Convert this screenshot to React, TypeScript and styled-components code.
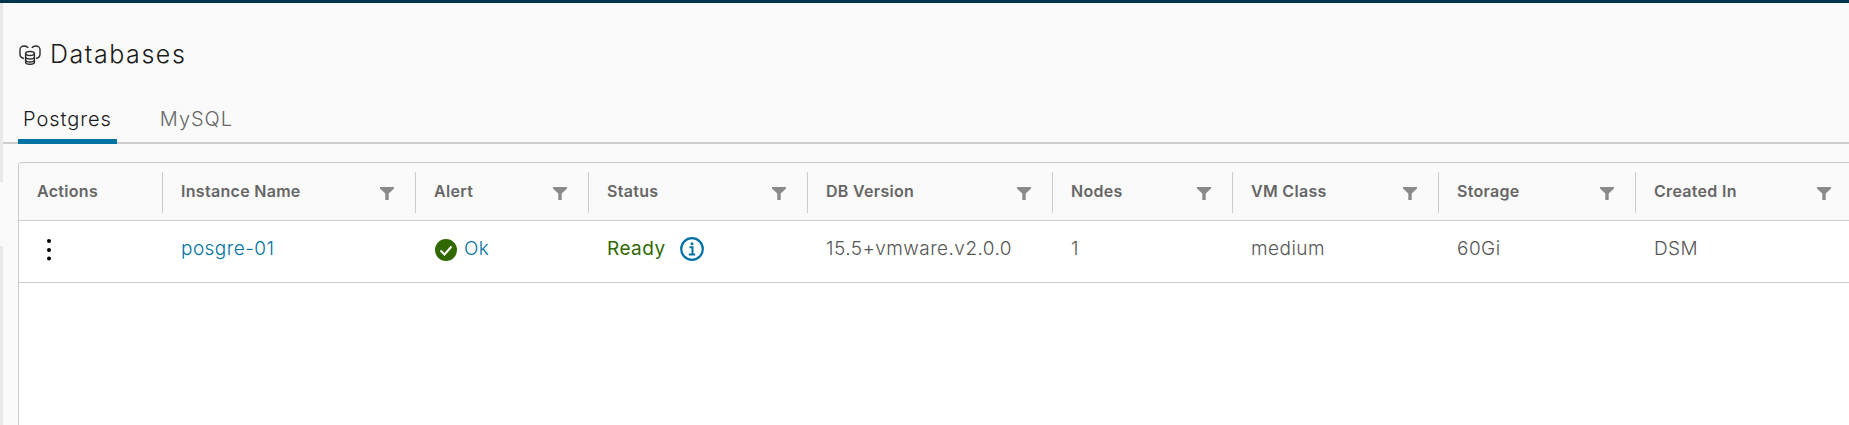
import React from 'react';
import styled, { createGlobalStyle } from 'styled-components';

const GlobalStyle = createGlobalStyle`
    html, body {
        margin: 0;
        padding: 0;
        height: 100%;
        overflow: hidden;
        background-color: #fafafa;
    }

    body {
        font-family: 'Inter', 'Open Sans', sans-serif;
    }
`;

const Page = styled.div`
    display: flex;
    flex-direction: column;
    width: 100vw;
    height: 100vh;
`;

const TopBar = styled.div`
    flex: 0 0 3px;
    background-color: #00364d;
`;

const Shell = styled.div`
    display: flex;
    flex: 1;
    min-height: 0;
`;

const Rail = styled.div`
    display: flex;
    flex: 0 0 3px;
    flex-direction: column;
    justify-content: space-between;
`;

const RailPiece = styled.div`
    height: 179px;
    background-color: #e8e8e8;
`;

const Main = styled.main`
    display: flex;
    flex: 1;
    flex-direction: column;
    min-width: 0;
    padding-left: 15px;
    overflow: hidden;
`;

const TitleRow = styled.div`
    display: flex;
    align-items: center;
    gap: 9px;
    height: 30px;
    margin: 37px 0 0 1px;
`;

const Title = styled.h1`
    margin: 0 0 2px;
    font-size: 25px;
    font-weight: 300;
    line-height: 30px;
    letter-spacing: 1.55px;
    color: #1b1b1b;
`;

const Tabs = styled.div`
    display: flex;
    height: 39px;
    margin: 33px 0 18px -15px;
    padding-left: 15px;
    border-bottom: 2px solid #cccccc;
`;

const Tab = styled.div<{ $active?: boolean }>`
    display: flex;
    align-items: center;
    height: 32px;
    padding: 0 5px 4px;
    margin-right: ${p => (p.$active ? '38px' : '0')};
    font-size: 20px;
    font-weight: 300;
    letter-spacing: 0.95px;
    color: ${p => (p.$active ? '#1b1b1b' : '#666666')};
    border-bottom: 5px solid ${p => (p.$active ? '#0072a3' : 'transparent')};
`;

const Table = styled.div`
    flex: 1;
    width: 1835px;
    background-color: #ffffff;
    border: 1px solid #cccccc;
    border-bottom: none;
    border-radius: 4px 0 0 0;
`;

const Grid = styled.div`
    display: grid;
    grid-template-columns: 144px 253px 173px 219px 245px 180px 206px 197px 217px;
`;

const HeaderRow = styled(Grid)`
    height: 57px;
    background-color: #fafafa;
    border-bottom: 1px solid #cccccc;
    border-radius: 4px 0 0 0;
`;

const BodyRow = styled(Grid)`
    height: 61px;
    border-bottom: 1px solid #cccccc;
`;

const HeaderCell = styled.div`
    display: flex;
    align-items: center;
    justify-content: space-between;
    position: relative;
    padding: 0 22px 2px 18px;
    font-size: 16px;
    font-weight: 600;
    letter-spacing: 0.3px;
    color: #666666;

    &:not(:last-child)::after {
        content: '';
        position: absolute;
        top: 9px;
        right: 0;
        width: 1px;
        height: 41px;
        background-color: #cccccc;
    }
`;

const Cell = styled.div`
    display: flex;
    align-items: center;
    padding: 0 18px 6px;
    font-size: 19px;
    font-weight: 300;
    letter-spacing: 0.45px;
    color: #565656;
`;

const CellLink = styled.span`
    color: #0072a3;
`;

const ReadyText = styled.span`
    margin-right: 14px;
    font-weight: 400;
    color: #2f6900;
`;

const FilterGlyph = styled.svg`
    margin-top: 6px;
`;

const KebabGlyph = styled.svg`
    margin: 3px 0 0 9px;
`;

const OkGlyph = styled.svg`
    margin: 3px 7px 0 1px;
`;

const FilterIcon = () => (
    <FilterGlyph width="14" height="13" viewBox="0 0 14 13">
        <path d="M0 0h14v1.4L8.7 6.6V13H5.3V6.6L0 1.4z" fill="#8a8a8a" />
    </FilterGlyph>
);

const DatabaseIcon = () => (
    <svg width="22" height="22" viewBox="0 0 22 22" fill="none" stroke="#2b2b2b" strokeWidth="1.4">
        <ellipse cx="11" cy="9.5" rx="4.4" ry="2" />
        <path d="M6.6 9.5v8.7c0 1.1 2 2 4.4 2s4.4-.9 4.4-2V9.5" />
        <path d="M6.6 13c0 1.1 2 2 4.4 2s4.4-.9 4.4-2M6.6 16c0 1.1 2 2 4.4 2s4.4-.9 4.4-2" />
        <path d="M5 14.5C2.6 14 1 12.6 1 10V5.5C1 3.4 3 2 5.2 2c1.8 0 3.2.7 4 2" />
        <path d="M17 14.5c2.4-.5 4-1.9 4-4.5V5.5C21 3.4 19 2 16.8 2c-1.8 0-3.2.7-4 2" />
    </svg>
);

const KebabIcon = () => (
    <KebabGlyph width="6" height="24" viewBox="0 0 6 24" fill="#000000">
        <circle cx="3" cy="3" r="2" />
        <circle cx="3" cy="12" r="2" />
        <circle cx="3" cy="20.5" r="2" />
    </KebabGlyph>
);

const OkIcon = () => (
    <OkGlyph width="22" height="22" viewBox="0 0 22 22">
        <circle cx="11" cy="11" r="11" fill="#2f6900" />
        <path d="M5.5 11.5l4 4 7-8" fill="none" stroke="#ffffff" strokeWidth="2" />
    </OkGlyph>
);

const InfoIcon = () => (
    <svg width="24" height="24" viewBox="0 0 24 24" fill="none" stroke="#0072a3">
        <circle cx="12" cy="12" r="10.8" strokeWidth="2.2" />
        <path d="M9.5 10.2h3v7M8.8 17.4h6.4" strokeWidth="2" />
        <circle cx="12" cy="6.8" r="1.5" fill="#0072a3" stroke="none" />
    </svg>
);

const filterableColumns = ['Instance Name', 'Alert', 'Status', 'DB Version', 'Nodes', 'VM Class', 'Storage', 'Created In'];

function App() {
    return (
        <Page>
            <GlobalStyle />
            <TopBar />
            <Shell>
                <Rail>
                    <RailPiece />
                    <RailPiece />
                </Rail>
                <Main>
                    <TitleRow>
                        <DatabaseIcon />
                        <Title>Databases</Title>
                    </TitleRow>
                    <Tabs>
                        <Tab $active>Postgres</Tab>
                        <Tab>MySQL</Tab>
                    </Tabs>
                    <Table>
                        <HeaderRow>
                            <HeaderCell>Actions</HeaderCell>
                            {filterableColumns.map(name => (
                                <HeaderCell key={name}>
                                    {name}
                                    <FilterIcon />
                                </HeaderCell>
                            ))}
                        </HeaderRow>
                        <BodyRow>
                            <Cell>
                                <KebabIcon />
                            </Cell>
                            <Cell>
                                <CellLink>posgre-01</CellLink>
                            </Cell>
                            <Cell>
                                <OkIcon />
                                <CellLink>Ok</CellLink>
                            </Cell>
                            <Cell>
                                <ReadyText>Ready</ReadyText>
                                <InfoIcon />
                            </Cell>
                            <Cell>15.5+vmware.v2.0.0</Cell>
                            <Cell>1</Cell>
                            <Cell>medium</Cell>
                            <Cell>60Gi</Cell>
                            <Cell>DSM</Cell>
                        </BodyRow>
                    </Table>
                </Main>
            </Shell>
        </Page>
    );
}

export default App;
